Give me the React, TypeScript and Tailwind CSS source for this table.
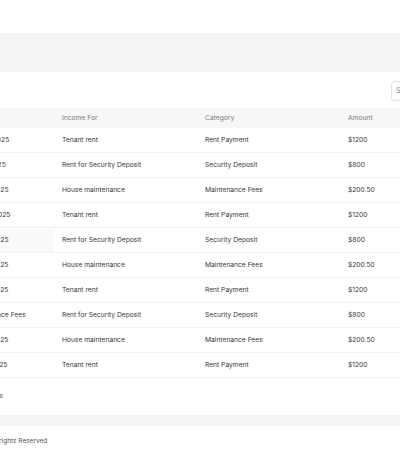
import React from 'react';

type Row = { date: string; income: string; category: string; amount: string; hover?: boolean };

const rows: Row[] = [
  { date: 'Mar 10, 2025', income: 'Tenant rent', category: 'Rent Payment', amount: '$1200' },
  { date: 'Feb 5, 2025', income: 'Rent for Security Deposit', category: 'Security Deposit', amount: '$800' },
  { date: 'Jan 12, 2025', income: 'House maintenance', category: 'Maintenance Fees', amount: '$200.50' },
  { date: 'May 14, 2025', income: 'Tenant rent', category: 'Rent Payment', amount: '$1200' },
  { date: 'Jan 14, 2025', income: 'Rent for Security Deposit', category: 'Security Deposit', amount: '$800', hover: true },
  { date: 'Jan 16, 2025', income: 'House maintenance', category: 'Maintenance Fees', amount: '$200.50' },
  { date: 'Jan 18, 2025', income: 'Tenant rent', category: 'Rent Payment', amount: '$1200' },
  { date: 'Maintenance Fees', income: 'Rent for Security Deposit', category: 'Security Deposit', amount: '$800' },
  { date: 'Jan 13, 2025', income: 'House maintenance', category: 'Maintenance Fees', amount: '$200.50' },
  { date: 'Jan 17, 2025', income: 'Tenant rent', category: 'Rent Payment', amount: '$1200' },
];

const cols = 'grid grid-cols-[154px_143px_143px_143px_120px]';

export default function App() {
  return (
    <div
      className="w-[400px] h-[457px] overflow-hidden bg-white text-[#363636]"
      style={{ fontFamily: 'Inter, "Noto Sans", sans-serif' }}
    >
      <div className="ml-[-100px] w-[703px]">
        {/* top bar */}
        <div className="h-[33px] bg-white" />
        <div className="h-[39px] bg-[#f4f4f4]" />

        {/* card */}
        <div className="bg-white">
          <div className="h-[36px] flex items-start">
            <div className="ml-[491px] mt-[9px] h-[20px] w-[120px] rounded-[3px] border border-[#e2e2e2] flex items-center px-[4px] text-[7px] text-[#888]">
              Search...
            </div>
          </div>

          {/* table */}
          <div className={`${cols} h-[20px] pt-[1px] items-center bg-[#f7f7f7] text-[6.7px] text-[#7a7a7a]`}>
            <div className="pl-[68px]">Date</div>
            <div className="pl-[8px]">Income For</div>
            <div className="pl-[8px]">Category</div>
            <div className="pl-[8px]">Amount</div>
            <div className="pl-[8px]">Action</div>
          </div>
          {rows.map((r, i) => (
            <div key={i} className={`${cols} h-[25px] pt-[1px] border-b border-[#f1f1f1] text-[6.7px]`}>
              <div className={`pl-[68px] flex items-center ${r.hover ? 'bg-[#f9f9f9]' : ''}`}>{r.date}</div>
              <div className="pl-[8px] flex items-center">{r.income}</div>
              <div className="pl-[8px] flex items-center">{r.category}</div>
              <div className="pl-[8px] flex items-center">{r.amount}</div>
              <div className="pl-[8px] flex items-center">Edit</div>
            </div>
          ))}

          <div className="h-[37px] flex items-center pl-[70px] text-[6.7px] text-[#555]">
            10 records
          </div>
        </div>

        <div className="h-[11px] bg-[#f4f4f4]" />
        <footer className="h-[31px] flex items-center pl-[64px] text-[6.5px] text-[#555]">
          © 2025 All rights Reserved
        </footer>
      </div>
    </div>
  );
}
